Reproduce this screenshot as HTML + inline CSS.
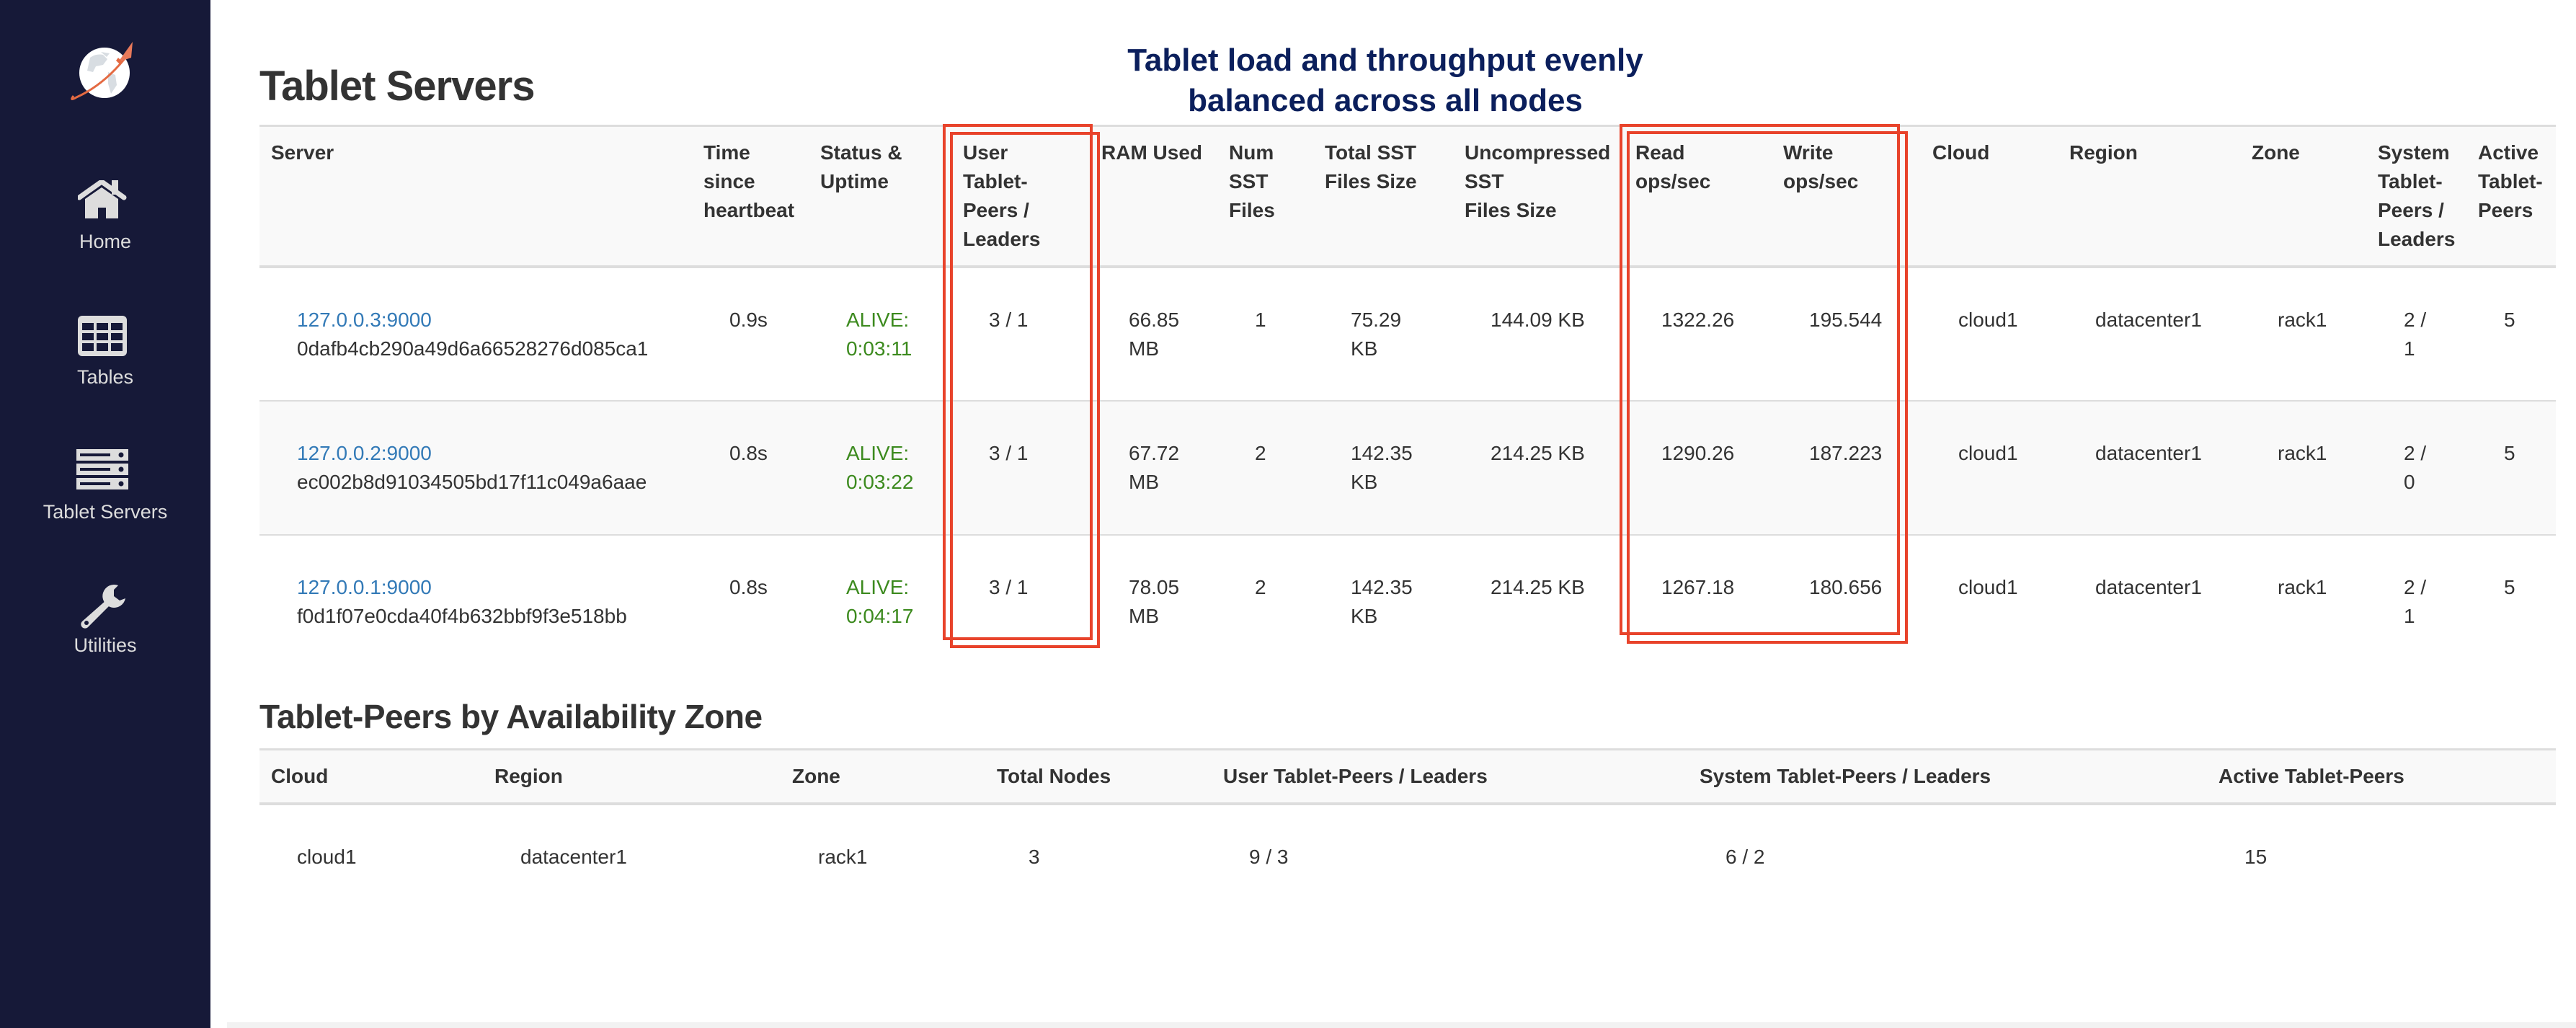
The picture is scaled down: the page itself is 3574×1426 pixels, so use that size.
<!DOCTYPE html>
<html><head><meta charset="utf-8"><style>
*{box-sizing:border-box;margin:0;padding:0}
html,body{width:3574px;height:1426px;overflow:hidden;background:#fff;font-family:"Liberation Sans",Helvetica,Arial,sans-serif;color:#333}
#side{position:absolute;left:0;top:0;width:292px;height:1426px;background:#161938}
.lbl{position:absolute;left:0;width:292px;text-align:center;color:#ddd;font-size:27px;line-height:30px}
.ic{position:absolute}
h1{position:absolute;left:360px;top:88px;font-size:58px;font-weight:bold;line-height:64px;color:#333;letter-spacing:-1px}
h3{position:absolute;left:360px;top:968px;font-size:46px;font-weight:bold;line-height:52px;color:#333;letter-spacing:-0.5px}
.note{position:absolute;left:1422px;width:1000px;top:56px;text-align:center;font-size:44px;font-weight:bold;line-height:56px;color:#0b1f5c}
table{position:absolute;left:360px;border-collapse:collapse;table-layout:fixed;font-size:28px;line-height:40px}
th{text-align:left;vertical-align:top;padding:16px;font-weight:bold;color:#333;background:#f9f9f9;white-space:nowrap}
td{text-align:left;vertical-align:top;padding:52px 8px 0 52px;color:#333;overflow:visible;white-space:nowrap}
#t1{top:173px;width:3186px;border-top:3px solid #ddd}
#t1 thead tr{height:195px;border-bottom:4px solid #ddd}
#t1 tbody tr{height:186px;border-bottom:2px solid #ddd}
#t1 tbody tr.last{border-bottom:none}
#t1 tbody tr.g{background:#f9f9f9}
#t2{top:1038px;width:3186px;border-top:3px solid #ddd}
#t2 thead tr{height:75px;border-bottom:4px solid #ddd}
#t2 td{padding-top:52px}
a{color:#337ab7;text-decoration:none}
.ok{color:#3c8a1e}
.box{position:absolute;border:4px solid #e8432b}
#foot{position:absolute;left:315px;top:1418px;width:3259px;height:8px;background:#f2f2f2}
</style></head><body>
<div id="side">
<svg class="ic" style="left:95px;top:50px" width="110" height="100" viewBox="95 50 110 100">
<circle cx="145" cy="101" r="35" fill="#fff"/>
<path d="M125 80 q8-6 18-4 l6 6 -6 8 -10 2 -4 8 -8-2z M150 100 l10 4 2 14 -8 12 -4-14z M140 72 l12 2 -4 5z" fill="#d8dde2"/>
<path d="M102 133 q-6 8 4 2 q40-18 72-60" stroke="#e46a42" stroke-width="3" fill="none"/>
<path d="M164 86 l20-28 -2 22 z" fill="#e8795a"/>
<path d="M161 84 l5 5 4-3 -6-6z" fill="#e46a42"/>
</svg>
<svg class="ic" style="left:108px;top:250px" width="68" height="56" viewBox="0 0 68 56">
<path d="M2 24 L33 2 L64 24" stroke="#ddd" stroke-width="7" stroke-linecap="round" stroke-linejoin="round" fill="none"/>
<rect x="47" y="0" width="9" height="20" fill="#ddd"/>
<path d="M10 26 L33 10 L56 26 V53 H39 V38 H28 V53 H10Z" fill="#ddd"/>
</svg>
<div class="lbl" style="top:320px">Home</div>
<svg class="ic" style="left:108px;top:438px" width="68" height="56" viewBox="0 0 68 56">
<rect x="0" y="0" width="68" height="56" rx="6" fill="#ddd"/>
<g fill="#161938"><rect x="6" y="10" width="16" height="10"/><rect x="26" y="10" width="16" height="10"/><rect x="46" y="10" width="16" height="10"/>
<rect x="6" y="24" width="16" height="10"/><rect x="26" y="24" width="16" height="10"/><rect x="46" y="24" width="16" height="10"/>
<rect x="6" y="38" width="16" height="11"/><rect x="26" y="38" width="16" height="11"/><rect x="46" y="38" width="16" height="11"/></g>
</svg>
<div class="lbl" style="top:508px">Tables</div>
<svg class="ic" style="left:106px;top:623px" width="72" height="56" viewBox="0 0 72 56">
<g fill="#ddd"><rect x="0" y="0" width="72" height="16"/><rect x="0" y="20" width="72" height="16"/><rect x="0" y="40" width="72" height="16"/></g>
<g fill="#161938"><rect x="5" y="6" width="42" height="4"/><rect x="5" y="26" width="42" height="4"/><rect x="5" y="46" width="42" height="4"/>
<circle cx="62" cy="8" r="3.5"/><circle cx="62" cy="28" r="3.5"/><circle cx="62" cy="48" r="3.5"/></g>
</svg>
<div class="lbl" style="top:695px">Tablet Servers</div>
<svg class="ic" style="left:108px;top:810px" width="68" height="64" viewBox="0 0 68 64">
<path d="M56 2 a16 16 0 1 0 10 18 l-8 3 -8-6 0-9z" fill="#ddd"/>
<path d="M40 22 L6 52 a5 5 0 0 0 8 8 L46 28z" fill="#ddd"/>
<circle cx="12" cy="54" r="3" fill="#161938"/>
</svg>
<div class="lbl" style="top:880px">Utilities</div>
</div>

<h1>Tablet Servers</h1>
<div class="note">Tablet load and throughput evenly<br>balanced across all nodes</div>

<table id="t1">
<colgroup><col style="width:600px"><col style="width:162px"><col style="width:198px"><col style="width:194px"><col style="width:175px"><col style="width:133px"><col style="width:194px"><col style="width:237px"><col style="width:205px"><col style="width:207px"><col style="width:190px"><col style="width:253px"><col style="width:175px"><col style="width:139px"><col style="width:124px"></colgroup>
<thead><tr><th>Server</th><th>Time<br>since<br>heartbeat</th><th>Status &amp;<br>Uptime</th><th>User<br>Tablet-<br>Peers /<br>Leaders</th><th style="padding-left:14px;padding-right:0">RAM Used</th><th>Num<br>SST<br>Files</th><th>Total SST<br>Files Size</th><th>Uncompressed<br>SST<br>Files Size</th><th>Read<br>ops/sec</th><th>Write<br>ops/sec</th><th>Cloud</th><th>Region</th><th>Zone</th><th>System<br>Tablet-<br>Peers /<br>Leaders</th><th style="padding-right:4px">Active<br>Tablet-<br>Peers</th></tr></thead>
<tbody>
<tr><td><a>127.0.0.3:9000</a><br>0dafb4cb290a49d6a66528276d085ca1</td><td>0.9s</td><td class="ok">ALIVE:<br>0:03:11</td><td>3 / 1</td><td>66.85<br>MB</td><td>1</td><td>75.29<br>KB</td><td>144.09 KB</td><td>1322.26</td><td>195.544</td><td>cloud1</td><td>datacenter1</td><td>rack1</td><td>2 /<br>1</td><td>5</td></tr>
<tr class="g"><td><a>127.0.0.2:9000</a><br>ec002b8d91034505bd17f11c049a6aae</td><td>0.8s</td><td class="ok">ALIVE:<br>0:03:22</td><td>3 / 1</td><td>67.72<br>MB</td><td>2</td><td>142.35<br>KB</td><td>214.25 KB</td><td>1290.26</td><td>187.223</td><td>cloud1</td><td>datacenter1</td><td>rack1</td><td>2 /<br>0</td><td>5</td></tr>
<tr class="last"><td><a>127.0.0.1:9000</a><br>f0d1f07e0cda40f4b632bbf9f3e518bb</td><td>0.8s</td><td class="ok">ALIVE:<br>0:04:17</td><td>3 / 1</td><td>78.05<br>MB</td><td>2</td><td>142.35<br>KB</td><td>214.25 KB</td><td>1267.18</td><td>180.656</td><td>cloud1</td><td>datacenter1</td><td>rack1</td><td>2 /<br>1</td><td>5</td></tr>
</tbody></table>

<div class="box" style="left:1308px;top:172px;width:208px;height:716px"></div>
<div class="box" style="left:1318px;top:183px;width:208px;height:716px"></div>
<div class="box" style="left:2247px;top:172px;width:389px;height:709px"></div>
<div class="box" style="left:2257px;top:182px;width:390px;height:711px"></div>

<h3>Tablet-Peers by Availability Zone</h3>
<table id="t2">
<colgroup><col style="width:310px"><col style="width:413px"><col style="width:284px"><col style="width:314px"><col style="width:661px"><col style="width:720px"><col style="width:484px"></colgroup>
<thead><tr><th>Cloud</th><th>Region</th><th>Zone</th><th>Total Nodes</th><th>User Tablet-Peers / Leaders</th><th>System Tablet-Peers / Leaders</th><th>Active Tablet-Peers</th></tr></thead>
<tbody><tr><td>cloud1</td><td>datacenter1</td><td>rack1</td><td style="padding-left:60px">3</td><td>9 / 3</td><td>6 / 2</td><td>15</td></tr></tbody>
</table>
<div id="foot"></div>
</body></html>
